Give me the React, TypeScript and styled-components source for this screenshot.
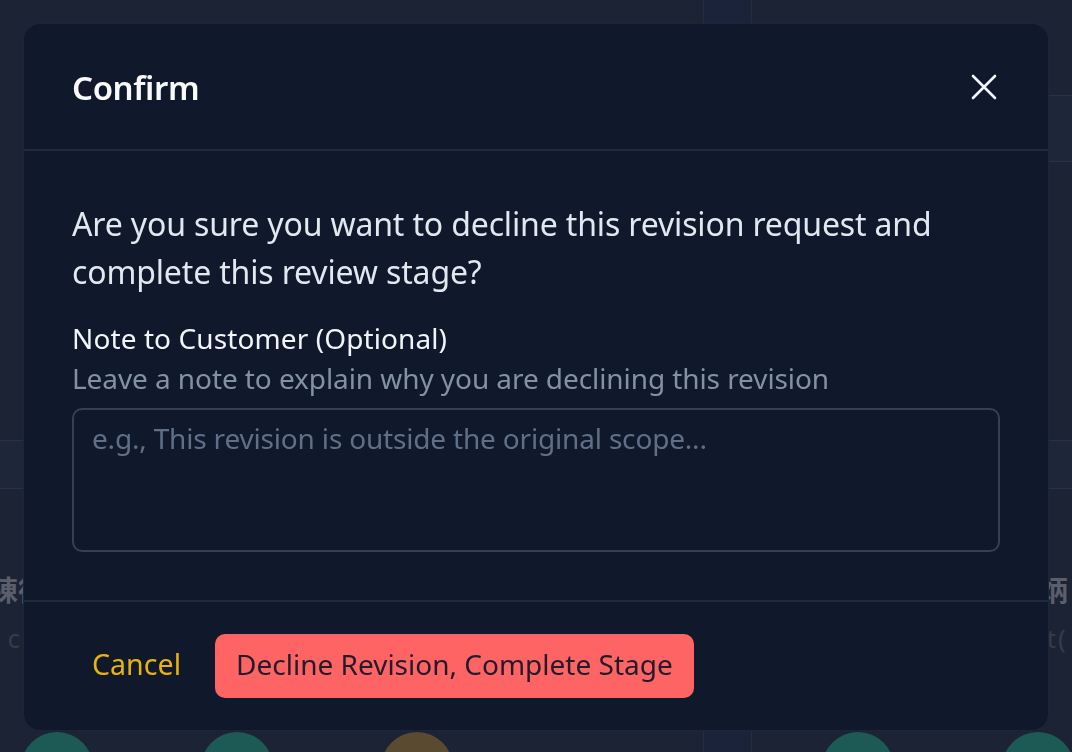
import React from "react"
import styled, { createGlobalStyle } from "styled-components"

const GlobalStyle = createGlobalStyle`
  html, body {
    margin: 0;
    padding: 0;
    background: #334061;
    font-family: "Noto Sans", "Noto Sans CJK TC", sans-serif;
    overflow: hidden;
  }
  * { box-sizing: border-box; }
`

// ---------- page behind the dialog ----------

const Board = styled.div`
  width: 1072px;
  height: 752px;
  display: grid;
  grid-template-columns: 703px 49px 1fr;
  background: #334061;
`

const Column = styled.div`
  display: flex;
  flex-direction: column;
  overflow: hidden;
`

const Gutter = styled.div`
  border-left: 1px solid #4a5266;
  border-right: 1px solid #4a5266;
  background: #30406a;
`

const TopSpace = styled.div<{ $h: number }>`
  height: ${({ $h }) => $h}px;
  flex: none;
`

const Band = styled.div<{ $h: number }>`
  height: ${({ $h }) => $h}px;
  flex: none;
  border-top: 1px solid #4c5a78;
  border-bottom: 1px solid #4c5a78;
  background: #38456a;
`

const MemberRow = styled.div<{ $shift: number }>`
  display: flex;
  margin-top: 81px;
  margin-left: ${({ $shift }) => $shift}px;
`

const Member = styled.div`
  display: flex;
  flex-direction: column;
  gap: 12px;
  white-space: nowrap;
`

const MemberName = styled.div`
  font-family: "Noto Sans CJK TC", sans-serif;
  font-weight: 700;
  font-size: 28px;
  line-height: 38px;
  color: #a4aec4;
`

const MemberMail = styled.div`
  font-size: 26px;
  line-height: 36px;
  color: #5f6c88;
  letter-spacing: 2px;
`

const AvatarRow = styled.div<{ $shift: number }>`
  display: flex;
  gap: 108px;
  margin-top: auto;
  margin-left: ${({ $shift }) => $shift}px;
  height: 20px;
`

const Avatar = styled.div<{ $tone: string }>`
  width: 72px;
  height: 72px;
  flex: none;
  border-radius: 50%;
  background: ${({ $tone }) => $tone};
`

// ---------- dialog ----------

const Backdrop = styled.div`
  position: fixed;
  inset: 0;
  background: rgba(0, 0, 0, 0.45);
  display: flex;
  align-items: flex-start;
  justify-content: center;
  padding-top: 24px;
`

const Dialog = styled.div`
  width: 1024px;
  background: #10182b;
  box-shadow: 0 0 0 1px #1d2638;
  border-radius: 16px;
  display: flex;
  flex-direction: column;
  overflow: hidden;
`

const Header = styled.div`
  height: 127px;
  padding: 0 48px;
  display: flex;
  align-items: center;
  justify-content: space-between;
  border-bottom: 2px solid #1f2a3c;
`

const Title = styled.h2`
  margin: 0;
  padding-top: 2px;
  font-size: 33px;
  font-weight: 600;
  color: #f8fafc;
  letter-spacing: -0.4px;
`

const CloseButton = styled.button`
  width: 32px;
  height: 32px;
  padding: 0;
  border: none;
  background: transparent;
  color: #f1f5f9;
  display: flex;
  align-items: center;
  justify-content: center;
  cursor: pointer;
`

const Body = styled.div`
  padding: 49px 48px 48px;
  display: flex;
  flex-direction: column;
  border-bottom: 2px solid #1f2a3c;
`

const Question = styled.p`
  margin: 0;
  font-size: 32px;
  line-height: 48px;
  color: #e2e8f0;
  letter-spacing: -0.15px;
`

const Label = styled.label`
  margin-top: 22px;
  font-size: 28px;
  line-height: 40px;
  color: #f1f5f9;
  letter-spacing: 0.1px;
`

const Hint = styled.div`
  font-size: 28px;
  line-height: 40px;
  color: #8391a7;
  letter-spacing: -0.08px;
`

const NoteField = styled.textarea`
  margin-top: 10px;
  height: 144px;
  resize: none;
  padding: 9px 18px;
  background: transparent;
  border: 2px solid #334155;
  border-radius: 10px;
  font-family: "Noto Sans", sans-serif;
  font-size: 28px;
  line-height: 38px;
  letter-spacing: -0.18px;
  color: #e2e8f0;
  outline: none;

  &::placeholder {
    color: #5f6f88;
  }
`

const Footer = styled.div`
  height: 128px;
  padding: 0 48px;
  display: flex;
  align-items: center;
  gap: 14px;
`

const CancelButton = styled.button`
  height: 64px;
  padding: 0 20px 5px;
  border: none;
  background: transparent;
  font-family: "Noto Sans", sans-serif;
  font-size: 28.6px;
  color: #eab308;
  cursor: pointer;
`

const DangerButton = styled.button`
  height: 64px;
  padding: 0 21px 5px;
  border: none;
  border-radius: 10px;
  background: #ff6464;
  font-family: "Noto Sans", sans-serif;
  font-size: 28px;
  color: #231a2b;
  cursor: pointer;
`

const CloseIcon = () => (
  <svg width="26" height="26" viewBox="0 0 26 26" fill="none">
    <path d="M2 2L24 24M24 2L2 24" stroke="currentColor" strokeWidth="2.6" strokeLinecap="round" />
  </svg>
)

export default function App() {
  return (
    <>
      <GlobalStyle />
      <Board>
        <Column>
          <TopSpace $h={440} />
          <Band $h={49} />
          <MemberRow $shift={-10}>
            <Member>
              <MemberName>陳德明</MemberName>
              <MemberMail>ı client</MemberMail>
            </Member>
          </MemberRow>
          <AvatarRow $shift={21}>
            <Avatar $tone="#35a59b" />
            <Avatar $tone="#35a59b" />
            <Avatar $tone="#a48757" />
          </AvatarRow>
        </Column>
        <Gutter />
        <Column>
          <TopSpace $h={95} />
          <Band $h={67} />
          <TopSpace $h={278} />
          <Band $h={49} />
          <MemberRow $shift={260}>
            <Member>
              <MemberName>王炳</MemberName>
              <MemberMail>ent(</MemberMail>
            </Member>
          </MemberRow>
          <AvatarRow $shift={70}>
            <Avatar $tone="#35a59b" />
            <Avatar $tone="#35a59b" />
          </AvatarRow>
        </Column>
      </Board>

      <Backdrop>
        <Dialog role="dialog" aria-labelledby="confirm-title">
          <Header>
            <Title id="confirm-title">Confirm</Title>
            <CloseButton aria-label="Close">
              <CloseIcon />
            </CloseButton>
          </Header>
          <Body>
            <Question>
              Are you sure you want to decline this revision request and complete this review stage?
            </Question>
            <Label htmlFor="note">Note to Customer (Optional)</Label>
            <Hint>Leave a note to explain why you are declining this revision</Hint>
            <NoteField id="note" placeholder="e.g., This revision is outside the original scope..." />
          </Body>
          <Footer>
            <CancelButton>Cancel</CancelButton>
            <DangerButton>Decline Revision, Complete Stage</DangerButton>
          </Footer>
        </Dialog>
      </Backdrop>
    </>
  )
}
